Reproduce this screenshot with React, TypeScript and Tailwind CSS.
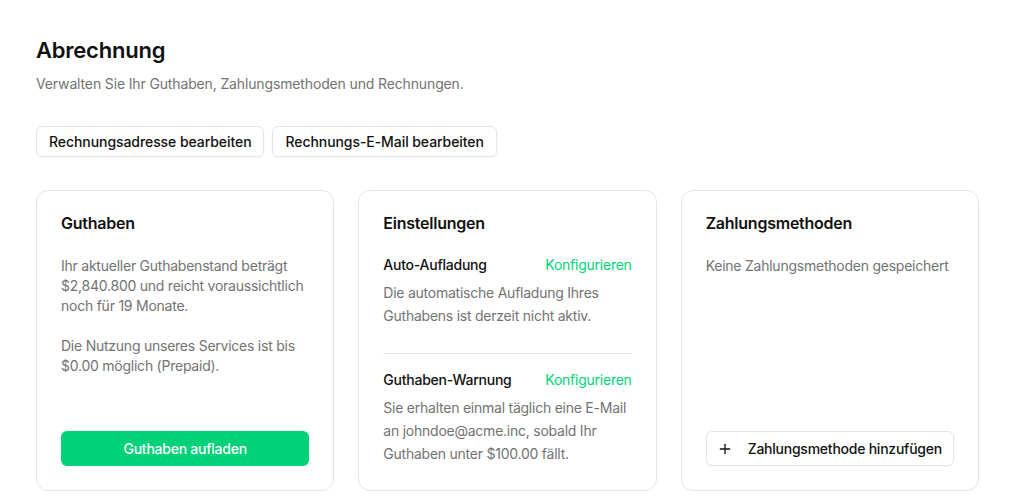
import { Plus } from 'lucide-react';

export default function App() {
  return (
    <main className="min-h-screen bg-white pl-9 pt-9 text-[#111111] font-['Inter',sans-serif] tracking-[-0.015em]">
      <h1 className="text-[22px] font-semibold leading-7 tracking-[-0.01em]">Abrechnung</h1>
      <p className="mt-[10px] text-sm tracking-[-0.01em] text-[#737373]">
        Verwalten Sie Ihr Guthaben, Zahlungsmethoden und Rechnungen.
      </p>

      <div className="mt-[32px] flex gap-2">
        <button className="h-[31px] rounded-md border border-[#e5e5e5] bg-white px-3 text-sm font-medium tracking-[-0.005em] shadow-[0_1px_2px_rgba(0,0,0,0.04)]">
          Rechnungsadresse bearbeiten
        </button>
        <button className="h-[31px] rounded-md border border-[#e5e5e5] bg-white px-3 text-sm font-medium tracking-[-0.005em] shadow-[0_1px_2px_rgba(0,0,0,0.04)]">
          Rechnungs-E-Mail bearbeiten
        </button>
      </div>

      <div className="mt-[33px] grid w-[943px] grid-cols-3 gap-6">
        <section className="flex h-[301px] flex-col rounded-xl border border-[#e5e5e5] px-6 pb-6 pt-5">
          <h2 className="text-base font-semibold leading-6">Guthaben</h2>
          <div className="mt-[21px] text-sm leading-5 text-[#737373]">
            <p>
              Ihr aktueller Guthabenstand beträgt $2,840.800 und reicht voraussichtlich noch für 19 Monate.
            </p>
            <p className="mt-5">Die Nutzung unseres Services ist bis $0.00 möglich (Prepaid).</p>
          </div>
          <button className="mt-auto h-[35px] w-full rounded-md bg-[#00d27a] text-sm font-medium text-white">
            Guthaben aufladen
          </button>
        </section>

        <section className="flex h-[301px] flex-col rounded-xl border border-[#e5e5e5] px-6 pb-6 pt-5">
          <h2 className="text-base font-semibold leading-6">Einstellungen</h2>
          <div className="mt-5 flex items-center justify-between text-sm leading-5">
            <span className="font-medium">Auto-Aufladung</span>
            <span className="text-[#00d27a]">Konfigurieren</span>
          </div>
          <p className="mt-[6px] text-sm leading-[23px] text-[#737373]">
            Die automatische Aufladung Ihres Guthabens ist derzeit nicht aktiv.
          </p>
          <div className="mt-[26px] h-px bg-[#e5e5e5]" />
          <div className="mt-[16px] flex items-center justify-between text-sm leading-5">
            <span className="font-medium">Guthaben-Warnung</span>
            <span className="text-[#00d27a]">Konfigurieren</span>
          </div>
          <p className="mt-[6px] text-sm leading-[23px] text-[#737373]">
            Sie erhalten einmal täglich eine E-Mail an johndoe@acme.inc, sobald Ihr Guthaben unter $100.00 fällt.
          </p>
        </section>

        <section className="flex h-[301px] flex-col rounded-xl border border-[#e5e5e5] px-6 pb-6 pt-5">
          <h2 className="text-base font-semibold leading-6">Zahlungsmethoden</h2>
          <p className="mt-[21px] text-sm leading-5 text-[#737373]">Keine Zahlungsmethoden gespeichert</p>
          <button className="mt-auto flex h-[35px] w-full items-center gap-[15px] rounded-md border border-[#e5e5e5] bg-white pl-[10px] text-sm font-medium shadow-[0_1px_2px_rgba(0,0,0,0.04)]">
            <Plus className="h-4 w-4" strokeWidth={2} />
            Zahlungsmethode hinzufügen
          </button>
        </section>
      </div>
    </main>
  );
}
